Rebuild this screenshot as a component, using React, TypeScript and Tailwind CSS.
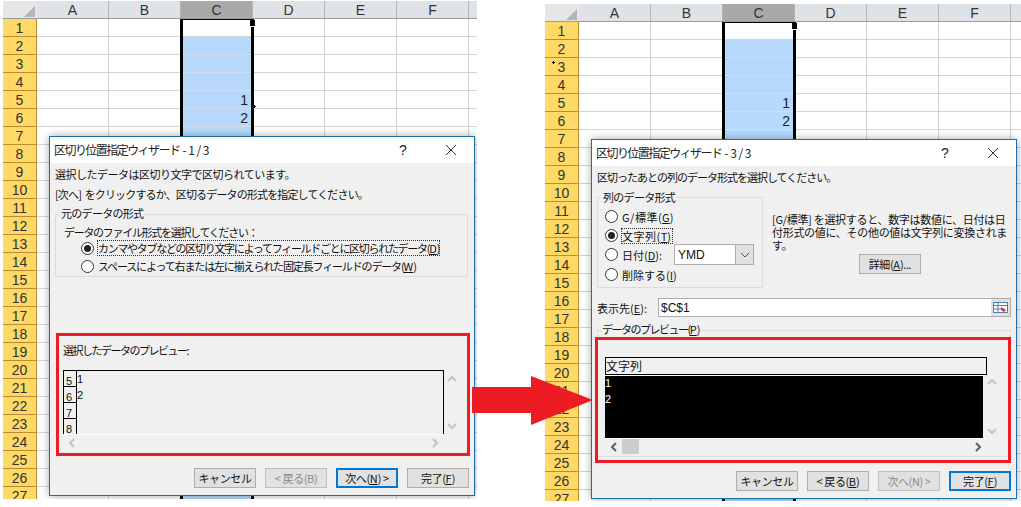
import type { ReactNode } from 'react'

const cols = ['A', 'B', 'C', 'D', 'E', 'F']
const rows = Array.from({ length: 27 }, (_, i) => i + 1)
const jp = "font-['Noto_Sans_CJK_JP','Liberation_Sans',sans-serif]"

function Sheet({ values, children, box }: { values: Record<number, string>; children: ReactNode; box: string }) {
  return (
    <div className={`relative overflow-hidden font-['Liberation_Sans',sans-serif] ${box}`}>
      <div className="flex h-[18px] border-b border-[#9c9c9c] bg-[#dfe3e8]">
        <div className="relative w-[34px] shrink-0 bg-[#e6e6e6]">
          <div className="absolute right-[2px] bottom-[1px] h-0 w-0 border-b-[11px] border-l-[11px] border-b-[#b5b5b5] border-l-transparent" />
        </div>
        {cols.map((c) => (
          <div
            key={c}
            className={`flex w-[72px] shrink-0 items-center justify-center border-r border-[#b4b6b8] pt-px text-[14px] text-[#333] ${c === 'C' ? 'bg-[#a9a9a9]' : ''}`}
          >
            {c}
          </div>
        ))}
        <div className="flex-1" />
      </div>
      {rows.map((r) => (
        <div key={r} className="flex h-[18px]">
          <div className="flex w-[34px] shrink-0 items-center justify-center border-r border-b border-r-[#c08a2e] border-b-[#c08a2e] bg-[#ffd966] pt-[2px] text-[14px] text-[#333]">
            {r}
          </div>
          {cols.map((c) => (
            <div
              key={c}
              className={`flex w-[72px] shrink-0 items-center justify-end border-r border-b border-[#d4d4d4] pt-[2px] pr-[4px] text-[14px] text-[#222] ${
                c === 'C' && r > 1 ? 'border-b-[#d0dfee] bg-[#b7d9fb]' : ''
              }`}
            >
              {c === 'C' ? values[r] : ''}
            </div>
          ))}
          <div className="flex-1 border-b border-[#d4d4d4]" />
        </div>
      ))}
      {/* selection border + fill handle */}
      <div className="absolute top-[18px] left-[177px] h-px w-[74px] bg-black" />
      <div className="absolute top-[18px] bottom-0 left-[177px] w-[3px] bg-black" />
      <div className="absolute top-[26px] bottom-0 left-[248px] w-[3px] bg-black" />
      <div className="absolute top-[19px] left-[247px] h-[6px] w-[5px] bg-black" />
      {children}
    </div>
  )
}

function Btn({ label, disabled, primary }: { label: ReactNode; disabled?: boolean; primary?: boolean }) {
  return (
    <div
      className={`flex h-[20px] w-[62px] items-center justify-center text-[11px] tracking-[-0.4px] ${
        primary ? 'border-2 border-[#0078d7] bg-[#e1e1e1]' : 'border border-[#adadad] bg-[#e1e1e1]'
      } ${disabled ? 'border-[#bfbfbf] bg-[#cccccc] text-[#8a8a8a]' : 'text-[#111]'}`}
    >
      {label}
    </div>
  )
}

function Radio({ on }: { on?: boolean }) {
  return (
    <span className="flex h-[13px] w-[13px] shrink-0 items-center justify-center rounded-full border border-[#333] bg-white">
      {on && <span className="h-[7px] w-[7px] rounded-full bg-[#222]" />}
    </span>
  )
}

function U({ children }: { children: ReactNode }) {
  return <span className="tracking-normal underline">{children}</span>
}

function Chevron({ dir, dark }: { dir: 'up' | 'down' | 'left' | 'right'; dark?: boolean }) {
  const d = {
    up: 'M1 6 L5 2 L9 6',
    down: 'M1 2 L5 6 L9 2',
    left: 'M6 1 L2 5 L6 9',
    right: 'M2 1 L6 5 L2 9',
  }[dir]
  return (
    <svg width={dir === 'up' || dir === 'down' ? 10 : 8} height={dir === 'up' || dir === 'down' ? 8 : 10} fill="none" stroke={dark ? '#606060' : '#c4c4c4'} strokeWidth="2">
      <path d={d} />
    </svg>
  )
}

// stray cursor speck left in the capture
function Speck({ pos }: { pos: string }) {
  return (
    <svg className={`absolute ${pos}`} width="3" height="3" fill="none" stroke="#000" strokeWidth="1">
      <path d="M1.5 0 V3 M0 1.5 H3" />
    </svg>
  )
}

function TitleBar({ text }: { text: string }) {
  return (
    <div className="flex h-[26px] items-center bg-white pl-[4px] text-[12px] text-[#222]">
      <span className="flex-1 tracking-[-1.55px] [word-spacing:2px]">{text}</span>
      <span className="w-[46px] font-['Liberation_Sans',sans-serif] text-[14px]">?</span>
      <svg width="12" height="12" className="mr-[17px]" stroke="#333" strokeWidth="1">
        <path d="M1 1 L11 11 M11 1 L1 11" />
      </svg>
    </div>
  )
}

function WizardOne() {
  return (
    <div className={`absolute top-[135px] left-[46px] h-[360px] w-[426px] border border-[#1b6ea8] bg-[#f0f0f0] text-[11px] leading-[14px] whitespace-nowrap text-[#111] shadow-[0_0_8px_rgba(0,0,0,0.35)] ${jp}`}>
      <TitleBar text="区切り位置指定ウィザード - 1 / 3" />
      <div className="px-[5px] pt-[4px]">
        <p className="tracking-[-0.5px]">選択したデータは区切り文字で区切られています。</p>
        <p className="mt-[6px] tracking-[-0.85px] [word-spacing:2px]">[次へ] をクリックするか、区切るデータの形式を指定してください。</p>
        <div className="relative mt-[13px] h-[63px] w-[413px] border border-[#dcdcdc] pt-[10px] pl-[8px]">
          <span className="absolute -top-[9px] left-[4px] bg-[#f0f0f0] px-px tracking-[-0.7px]">元のデータの形式</span>
          <p className="tracking-[-1.3px]">データのファイル形式を選択してください：</p>
          <div className="mt-[2px] flex items-center gap-[4px] pl-[17px]">
            <Radio on />
            <span className="tracking-[-1.3px] outline-1 outline-[#333] outline-dotted">カンマやタブなどの区切り文字によってフィールドごとに区切られたデータ(<U>D</U>)</span>
          </div>
          <div className="mt-[4px] flex items-center gap-[4px] pl-[17px]">
            <Radio />
            <span className="tracking-[-1.15px]">スペースによって右または左に揃えられた固定長フィールドのデータ(<U>W</U>)</span>
          </div>
        </div>
        <div className="relative mt-[56px] ml-[1px] h-[123px] w-[414px] border-[3px] border-[#ed1c24] pt-[7px] pl-[4px]">
          <p className="tracking-[-1.5px]">選択したデータのプレビュー:</p>
          <div className="mt-[13px] flex h-[64px] w-[381px] overflow-hidden border-x border-t border-black">
            <div className="w-[13px] shrink-0 font-['Liberation_Sans',sans-serif] text-[11px] leading-[16px]">
              {[5, 6, 7, 8].map((n) => (
                <div key={n} className="h-[16px] border-r border-b border-black pt-[2px] pl-[2px]">{n}</div>
              ))}
            </div>
            <div className="font-['Liberation_Sans',sans-serif] text-[11px] leading-[16px]">
              <div>1</div>
              <div>2</div>
            </div>
          </div>
          <div className="absolute top-[39px] right-[10px] flex h-[55px] flex-col justify-between">
            <Chevron dir="up" />
            <Chevron dir="down" />
          </div>
          <div className="flex w-[381px] items-center justify-between border-t border-white px-[5px] pt-[3px]">
            <Chevron dir="left" />
            <Chevron dir="right" />
          </div>
        </div>
        <div className="mt-[12px] flex justify-end gap-[9px]">
          <Btn label="キャンセル" />
          <Btn label="< 戻る(B)" disabled />
          <Btn label={<>次へ(<U>N</U>) &gt;</>} primary />
          <Btn label={<>完了(<U>F</U>)</>} />
        </div>
      </div>
    </div>
  )
}

function WizardThree() {
  return (
    <div className={`absolute top-[135px] left-[46px] h-[360px] w-[426px] border border-[#1b6ea8] bg-[#f0f0f0] text-[11px] leading-[14px] whitespace-nowrap text-[#111] shadow-[0_0_8px_rgba(0,0,0,0.35)] ${jp}`}>
      <TitleBar text="区切り位置指定ウィザード - 3 / 3" />
      <div className="px-[5px] pt-[4px]">
        <p className="tracking-[-1px]">区切ったあとの列のデータ形式を選択してください。</p>
        <div className="mt-[13px] flex">
          <div className="relative h-[91px] w-[166px] shrink-0 border border-[#dcdcdc] pt-[12px] pl-[7px]">
            <span className="absolute -top-[8px] left-[4px] bg-[#f0f0f0] px-px tracking-[-0.7px]">列のデータ形式</span>
            <div className="flex h-[13px] items-center gap-[4px]"><Radio /><span className="tracking-[0.5px]">G/標準(<U>G</U>)</span></div>
            <div className="mt-[6px] flex h-[13px] items-center gap-[4px]"><Radio on /><span className="tracking-[0.5px] outline-1 outline-[#333] outline-dotted">文字列(<U>T</U>)</span></div>
            <div className="mt-[6px] flex h-[13px] items-center gap-[4px]">
              <Radio />
              <span className="w-[48px]">日付(<U>D</U>):</span>
              <div className="flex h-[21px] w-[80px] shrink-0 items-center border border-[#adadad] bg-white pl-[3px] font-['Liberation_Sans',sans-serif] text-[12px]">
                <span className="flex-1">YMD</span>
                <span className="flex h-full w-[18px] items-center justify-center border-l border-[#adadad] bg-[#e1e1e1]">
                  <svg width="10" height="6" fill="none" stroke="#555" strokeWidth="1"><path d="M1 1 L5 5 L9 1" /></svg>
                </span>
              </div>
            </div>
            <div className="mt-[7px] flex h-[13px] items-center gap-[4px]"><Radio /><span>削除する(<U>I</U>)</span></div>
          </div>
          <div className="ml-[9px] pt-[16px]">
            <p className="leading-[13px] tracking-[-0.3px]">
              [G/標準] を選択すると、数字は数値に、日付は日
              <br />
              付形式の値に、その他の値は文字列に変換されま
              <br />
              す。
            </p>
            <div className="mt-[2px] ml-[87px]">
              <Btn label={<>詳細(<U>A</U>)...</>} />
            </div>
          </div>
        </div>
        <div className="mt-[10px] flex h-[19px] items-center">
          <span className="w-[61px]">表示先(<U>E</U>):</span>
          <div className="flex h-[19px] w-[353px] items-center border border-[#adadad] bg-white pl-[2px] font-['Liberation_Sans',sans-serif] text-[12px]">
            <span className="flex-1">$C$1</span>
            <span className="flex h-full w-[19px] items-center justify-center bg-[#e1e1e1]">
              <svg width="15" height="11">
                <rect x="0.5" y="0.5" width="14" height="10" fill="#fff" stroke="#4f7fb0" />
                <path d="M1 3.5 H14 M1 7 H8 M5 1 V10" stroke="#4f7fb0" />
                <path d="M8 5 L13 8 L11 10 L8 8 Z" fill="#d9342b" />
              </svg>
            </span>
          </div>
        </div>
        <div className="relative mt-[13px] h-[127px] w-[414px] border-b border-[#dcdcdc]">
          <div className="h-[8px] border-x border-t border-[#dcdcdc]" />
          <span className="absolute -top-[8px] left-[4px] bg-[#f0f0f0] px-px tracking-[-1.5px]">データのプレビュー(<U>P</U>)</span>
          <div className="absolute top-[7px] -left-[2px] h-[126px] w-[416px] border-[3px] border-[#ed1c24] pt-[17px] pl-[7px]">
            <div className="h-[17px] w-[382px] border-x border-t border-black text-[12px] leading-[16px]">文字列</div>
            <div className="w-[382px] border-t border-black pr-[4px]">
              <div className="h-[63px] border-t border-white bg-black font-['Liberation_Sans',sans-serif] text-[11px] leading-[16px] text-white">
                <div className="-mt-px">1</div>
                <div>2</div>
              </div>
            </div>
            <div className="flex h-[16px] w-[382px] items-center justify-between border-t border-white px-[5px]">
              <span className="flex items-center gap-[4px]">
                <Chevron dir="left" dark />
                <span className="h-[15px] w-[17px] bg-[#cdcdcd]" />
              </span>
              <Chevron dir="right" dark />
            </div>
            <div className="absolute top-[38px] right-[11px] flex h-[57px] flex-col justify-between">
              <Chevron dir="up" />
              <Chevron dir="down" />
            </div>
          </div>
        </div>
        <div className="mt-[14px] flex justify-end gap-[9px]">
          <Btn label="キャンセル" />
          <Btn label={<>&lt; 戻る(<U>B</U>)</>} />
          <Btn label="次へ(N) >" disabled />
          <Btn label={<>完了(<U>F</U>)</>} primary />
        </div>
      </div>
    </div>
  )
}

export default function App() {
  return (
    <div className="relative flex h-[507px] w-[1021px] overflow-hidden bg-white pl-[3px]">
      <Sheet values={{ 5: '1', 6: '2' }} box="mt-[1px] h-[498px] w-[474px]">
        <Speck pos="top-[104px] left-[250px]" />
        <WizardOne />
      </Sheet>
      <Sheet values={{ 5: '1', 6: '2' }} box="mt-[4px] ml-[68px] h-[497px] w-[476px]">
        <Speck pos="top-[57px] left-[7px]" />
        <WizardThree />
      </Sheet>
      {/* arrow between the two screens */}
      <svg className="absolute top-[374px] left-[472px]" width="122" height="54">
        <path d="M0 13 H59 V2 L121 26 L59 51 V39 H0 Z" fill="#ed1c24" />
      </svg>
    </div>
  )
}
